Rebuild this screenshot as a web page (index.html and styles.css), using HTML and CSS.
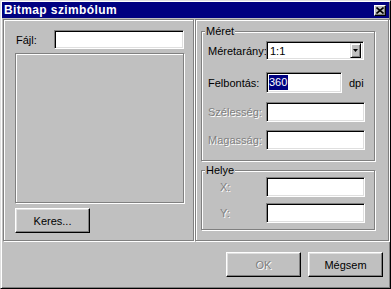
FILE: index.html
```html
<!DOCTYPE html>
<html lang="hu">
<head>
  <meta charset="UTF-8">
  <title>Bitmap szimbólum</title>
  <link rel="stylesheet" href="styles.css">
</head>
<body>
  <div class="window">
    <div class="titlebar">
      <span class="title">Bitmap szimbólum</span>
      <span class="close">
        <svg width="8" height="7" viewBox="0 0 8 7">
          <path d="M0.5 0.5 L7.5 6.5 M7.5 0.5 L0.5 6.5" stroke="#000" stroke-width="1.6" fill="none"/>
        </svg>
      </span>
    </div>

    <div class="panels">
      <div class="panel panel-left">
        <div class="file-row">
          <span class="file-label">Fájl:</span>
          <span class="field file-field"></span>
        </div>
        <div class="preview"></div>
        <button class="btn btn-search">Keres...</button>
      </div>

      <div class="panel panel-right">
        <div class="group group-size">
          <span class="group-title">Méret</span>
          <div class="frow">
            <span class="flabel">Méretarány:</span>
            <span class="field select">
              <span class="select-text">1:1</span>
              <span class="select-btn">
                <svg width="5" height="3" viewBox="0 0 5 3"><path d="M0 0 H5 L2.5 3 Z" fill="#000"/></svg>
              </span>
            </span>
          </div>
          <div class="frow frow-res">
            <span class="flabel">Felbontás:</span>
            <span class="field res-field"><span class="sel">360</span></span>
            <span class="unit">dpi</span>
          </div>
          <div class="frow frow-w">
            <span class="flabel disabled">Szélesség:</span>
            <span class="field wide-field"></span>
          </div>
          <div class="frow frow-h">
            <span class="flabel disabled">Magasság:</span>
            <span class="field wide-field"></span>
          </div>
        </div>

        <div class="group group-pos">
          <span class="group-title">Helye</span>
          <div class="frow">
            <span class="flabel flabel-xy disabled">X:</span>
            <span class="field wide-field"></span>
          </div>
          <div class="frow frow-y">
            <span class="flabel flabel-xy disabled">Y:</span>
            <span class="field wide-field"></span>
          </div>
        </div>
      </div>
    </div>

    <div class="footer">
      <button class="btn btn-ok disabled">OK</button>
      <button class="btn">Mégsem</button>
    </div>
  </div>
</body>
</html>
```

FILE: styles.css
```css
body {
  margin: 0;
  background: #c0c0c0;
  font-family: "Liberation Sans", Arial, sans-serif;
  font-size: 11px;
  color: #000;
}

.window {
  width: 391px;
  height: 289px;
  box-sizing: border-box;
  border: 1px solid;
  border-color: #dfdfdf #000 #000 #dfdfdf;
  box-shadow: inset 1px 1px 0 #fff, inset -1px -1px 0 #808080;
  padding: 1px;
  display: flex;
  flex-direction: column;
}

.titlebar {
  height: 16px;
  background: #000080;
  color: #fff;
  display: flex;
  align-items: center;
  justify-content: space-between;
  padding: 0 3px 0 2px;
}

.title {
  font-weight: bold;
  font-size: 12px;
  letter-spacing: 0.4px;
}

.close {
  width: 12px;
  height: 11px;
  box-sizing: border-box;
  background: #c0c0c0;
  border: 1px solid;
  border-color: #fff #000 #000 #fff;
  box-shadow: inset -1px -1px 0 #808080;
  display: flex;
  align-items: center;
  justify-content: center;
}

.panels {
  display: flex;
  gap: 1px;
  margin: 1px 0 0 1px;
  height: 222px;
}

.panel {
  box-sizing: border-box;
  border: 1px solid #808080;
  box-shadow: inset 1px 1px 0 #fff, 1px 1px 0 #fff;
}

.panel-left {
  width: 191px;
  padding: 10px 9px 0 11px;
}

.panel-right {
  flex: 1;
  padding: 11px 13px 0 5px;
}

.file-row {
  display: flex;
  align-items: center;
  height: 19px;
}

.file-label {
  padding-left: 1px;
}

.field {
  display: flex;
  align-items: center;
  box-sizing: border-box;
  background: #fff;
  border: 1px solid;
  border-color: #808080 #fff #fff #808080;
  box-shadow: inset 1px 1px 0 #000, inset -1px -1px 0 #dfdfdf;
}

.file-field {
  width: 130px;
  height: 19px;
  margin-left: auto;
}

.preview {
  margin-top: 4px;
  height: 150px;
  box-sizing: border-box;
  border: 1px solid #808080;
  box-shadow: inset 1px 1px 0 #fff, 1px 1px 0 #fff;
}

.btn {
  box-sizing: border-box;
  width: 75px;
  height: 25px;
  padding: 0;
  background: #c0c0c0;
  border: 1px solid;
  border-color: #fff #000 #000 #fff;
  box-shadow: inset -1px -1px 0 #808080, inset 1px 1px 0 #dfdfdf;
  font-family: inherit;
  font-size: 11px;
  color: #000;
}

.btn-search {
  display: block;
  margin-top: 5px;
}

.group {
  position: relative;
  box-sizing: border-box;
  border: 1px solid #808080;
  box-shadow: inset 1px 1px 0 #fff, 1px 1px 0 #fff;
}

.group-title {
  position: absolute;
  top: -7px;
  left: 3px;
  padding: 0 1px;
  line-height: 13px;
  background: #c0c0c0;
}

.group-size {
  height: 130px;
  padding-top: 9px;
}

.group-pos {
  height: 60px;
  margin-top: 9px;
  padding-top: 6px;
}

.frow {
  display: flex;
  align-items: center;
}

.flabel {
  width: 64px;
  flex-shrink: 0;
  box-sizing: border-box;
  padding-left: 6px;
  white-space: nowrap;
}

.flabel-xy {
  padding-left: 18px;
}

.disabled {
  color: #808080;
  text-shadow: 1px 1px 0 #fff;
}

.select {
  width: 98px;
  height: 19px;
  padding: 2px;
}

.select-text {
  padding-left: 1px;
}

.select-btn {
  margin-left: auto;
  width: 11px;
  height: 15px;
  box-sizing: border-box;
  background: #c0c0c0;
  border: 1px solid;
  border-color: #dfdfdf #000 #000 #dfdfdf;
  box-shadow: inset 1px 1px 0 #fff, inset -1px -1px 0 #808080;
  display: flex;
  align-items: center;
  justify-content: center;
}

.frow-res {
  margin-top: 12px;
}

.res-field {
  width: 76px;
  height: 21px;
  padding: 2px;
}

.sel {
  background: #000080;
  color: #fff;
  line-height: 15px;
  padding-right: 1px;
}

.unit {
  margin-left: 7px;
}

.wide-field {
  width: 99px;
  height: 20px;
}

.frow-w {
  margin-top: 9px;
}

.frow-h {
  margin-top: 8px;
}

.frow-y {
  margin-top: 6px;
}

.footer {
  display: flex;
  justify-content: flex-end;
  gap: 7px;
  margin: 11px 6px 0 0;
}
```
